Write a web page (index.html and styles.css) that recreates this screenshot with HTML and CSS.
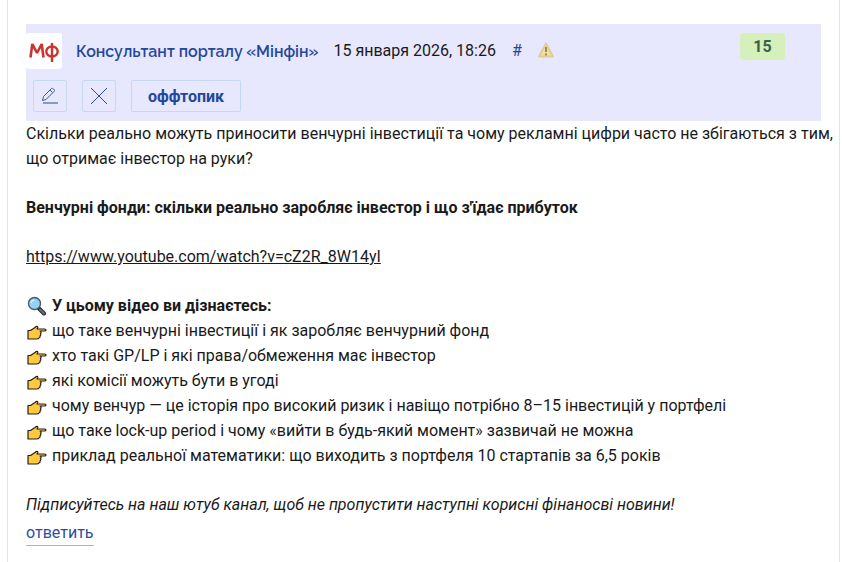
FILE: index.html
```html
<!DOCTYPE html>
<html lang="uk">
<head>
<meta charset="utf-8">
<meta name="viewport" content="width=device-width, initial-scale=1">
<title>Консультант порталу «Мінфін»</title>
<link rel="stylesheet" href="styles.css">
</head>
<body>
<svg class="sprite" aria-hidden="true">
  <symbol id="hand" viewBox="0 0 20 16">
    <path d="M1 5.500H3.500L8 2.500Q9.500 1 10.500 1.500Q11.500 2.500 10 4H17.500Q19 4 19 5Q19 6 17.500 6H13Q15 7 13.500 8.500Q14.500 10 13 11Q13.500 12.500 12 13Q11.500 14 9.500 14H1Z" fill="#ffc83d" stroke="#231f20" stroke-width="1.200" stroke-linejoin="round"/>
  </symbol>
</svg>
<main class="card">
  <article class="comment">
    <header class="head">
      <div class="meta">
        <svg class="avatar" viewBox="0 0 36 36" role="img" aria-label="Мінфін">
          <rect width="36" height="36" rx="3" fill="#fff"/>
          <path d="M4.500 24.500L6.300 11L11 20L15.700 11L17.500 24.500" fill="none" stroke="#cb3430" stroke-width="2.600" stroke-linejoin="bevel"/>
          <ellipse cx="26" cy="18.500" rx="5.700" ry="5" fill="none" stroke="#cb3430" stroke-width="2.400"/>
          <path d="M26 10V29" stroke="#cb3430" stroke-width="2.400"/>
        </svg>
        <a class="author" href="#">Консультант порталу «Мінфін»</a>
        <time class="date" datetime="2026-01-15T18:26">15 января 2026, 18:26</time>
        <a class="anchor" href="#">#</a>
        <button class="report" type="button" aria-label="Пожаловаться">
          <svg viewBox="0 0 16 16" width="16" height="16">
            <path d="M8 1.500L15 14.500H1Z" fill="#f2df9c" stroke="#dfcd94" stroke-width="2" stroke-linejoin="round"/>
            <path d="M8 5V10M8 11.500V13.500" stroke="#938d70" stroke-width="2"/>
          </svg>
        </button>
        <span class="score">15</span>
      </div>
      <div class="actions">
        <button class="btn icon" type="button" aria-label="Редактировать">
          <svg viewBox="0 0 18 18" width="18" height="18" fill="none" stroke="#3c57a5">
            <path d="M1.500 13.500L2.500 9.500L10.500 1.500Q11.500 1 12.500 2L13 2.500Q14 3.500 13 4.500L5 12.500ZM9 3L11.500 5.500"/>
            <path d="M2 16H17" stroke="#8798cb" stroke-width="2"/>
          </svg>
        </button>
        <button class="btn icon" type="button" aria-label="Удалить">
          <svg viewBox="0 0 18 18" width="18" height="18" fill="none" stroke="#2d4a9c"><path d="M1 1L17 17M17 1L1 17"/></svg>
        </button>
        <button class="btn offtop" type="button">оффтопик</button>
      </div>
    </header>
    <div class="text">
      <p>Скільки реально можуть приносити венчурні інвестиції та чому рекламні цифри часто не збігаються з тим, що отримає інвестор на руки?</p>
      <p><strong>Венчурні фонди: скільки реально заробляє інвестор і що з'їдає прибуток</strong></p>
      <p><a class="video" href="#">https://www.youtube.com/watch?v=cZ2R_8W14yI</a></p>
      <div>
        <p class="row"><svg class="emoji" viewBox="0 0 20 20">
          <path d="M11.500 12L17 17.500" stroke="#25292b" stroke-width="4" stroke-linecap="round"/>
          <path d="M13 13.500L17 17.500" stroke="#697077" stroke-width="2" stroke-linecap="round"/>
          <circle cx="7.500" cy="7.500" r="6" fill="#92d3f5" stroke="#4c5962" stroke-width="1.400"/>
          <path d="M4 7Q4.500 4.500 7 4" fill="none" stroke="#d8f1fd" stroke-width="1.500"/>
        </svg><strong>У цьому відео ви дізнаєтесь:</strong></p>
        <ul class="list">
          <li class="row"><svg class="emoji hand"><use href="#hand"/></svg>що таке венчурні інвестиції і як заробляє венчурний фонд</li>
          <li class="row"><svg class="emoji hand"><use href="#hand"/></svg>хто такі GP/LP і які права/обмеження має інвестор</li>
          <li class="row"><svg class="emoji hand"><use href="#hand"/></svg>які комісії можуть бути в угоді</li>
          <li class="row"><svg class="emoji hand"><use href="#hand"/></svg>чому венчур — це історія про високий ризик і навіщо потрібно 8–15 інвестицій у портфелі</li>
          <li class="row"><svg class="emoji hand"><use href="#hand"/></svg>що таке lock-up period і чому «вийти в будь-який момент» зазвичай не можна</li>
          <li class="row"><svg class="emoji hand"><use href="#hand"/></svg>приклад реальної математики: що виходить з портфеля 10 стартапів за 6,5 років</li>
        </ul>
      </div>
      <p><em>Підписуйтесь на наш ютуб канал, щоб не пропустити наступні корисні фінаносві новини!</em></p>
    </div>
    <a class="reply" href="#">ответить</a>
  </article>
</main>
</body>
</html>
```

FILE: styles.css
```css
* {
  box-sizing: border-box;
}

body {
  margin: 0;
  background: #fff;
  color: #1a1a1a;
  font: 16px/25px Roboto, "Liberation Sans", sans-serif;
}

.sprite {
  position: absolute;
  width: 0;
  height: 0;
}

.card {
  min-height: 100vh;
  margin: 0 2px 0 7px;
  padding: 24px 2px 16px 18px;
  border: solid #e3e3e6;
  border-width: 0 1px;
}

.head {
  margin-right: 16px;
  padding: 9px 0;
  background: #e7e7fe;
}

.meta {
  display: flex;
  align-items: center;
  padding-right: 36px;
}

.avatar {
  width: 36px;
  height: 36px;
  margin-right: 14px;
}

.author {
  margin-right: 15px;
  color: #244899;
  font-family: Raleway, Inter, Roboto, sans-serif;
  font-weight: 600;
  text-decoration: none;
}

.date,
.anchor,
.report {
  margin-bottom: 2px;
}

.anchor {
  margin-right: 16px;
  margin-left: 16px;
  color: #244899;
  text-decoration: none;
}

.report {
  display: flex;
  padding: 0;
  border: 0;
  background: none;
}

.score {
  align-self: flex-start;
  width: 45px;
  height: 27px;
  margin-left: auto;
  border-radius: 4px;
  background: #d6f0bb;
  color: #37634b;
  font-weight: 700;
  line-height: 28px;
  text-align: center;
}

.actions {
  display: flex;
  gap: 15px;
  padding: 11px 0 0 7px;
}

.btn {
  display: flex;
  align-items: center;
  justify-content: center;
  height: 32px;
  padding: 0 16px;
  border: 1px solid #c5d8f4;
  border-radius: 2px;
  background: none;
  color: #244899;
  font: inherit;
  font-weight: 700;
}

.icon {
  width: 34px;
  padding: 0;
}

.text {
  display: flex;
  flex-direction: column;
  gap: 24px;
}

.text p {
  margin: 0;
}

.video {
  color: inherit;
}

.list {
  margin: 0;
  padding: 0;
  list-style: none;
}

.row {
  display: flex;
  align-items: center;
}

.emoji {
  flex: none;
  width: 20px;
  height: 20px;
  margin: 0 5px 0 1px;
}

.hand {
  height: 16px;
  margin-top: 4px;
}

.reply {
  display: inline-block;
  margin-top: 3px;
  border-bottom: 1px solid #a3b3d9;
  color: #2d4da0;
  text-decoration: none;
}
```
